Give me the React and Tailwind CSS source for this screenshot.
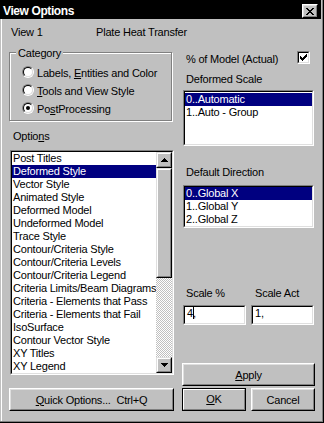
import React from 'react';

const FONT = "font-['Liberation_Sans',Arial,sans-serif]";

// sunken 2px well (listbox, edit, checkbox)
const Sunken = ({ className = '', innerClass = '', children }) => (
    <div className={`border border-t-[#808080] border-l-[#808080] border-b-white border-r-white ${className}`}>
        <div className={`h-full border border-t-black border-l-black border-b-[#dfdfdf] border-r-[#dfdfdf] bg-white ${innerClass}`}>
            {children}
        </div>
    </div>
);

// raised push button edges
const Raised = ({ className = '', innerClass = '', children }) => (
    <div className={`border border-t-white border-l-white border-b-black border-r-black bg-[#c0c0c0] ${className}`}>
        <div className={`h-full border border-t-[#dfdfdf] border-l-[#dfdfdf] border-b-[#808080] border-r-[#808080] ${innerClass}`}>
            {children}
        </div>
    </div>
);

const Button = ({ className = '', children }) => (
    <Raised className={`h-[23px] ${className}`} innerClass="flex items-center justify-center pt-px whitespace-pre">
        {children}
    </Raised>
);

const Radio = ({ checked }) => (
    <div className="w-[12px] h-[12px] rounded-full border border-t-[#808080] border-l-[#808080] border-b-white border-r-white shrink-0">
        <div className="w-full h-full rounded-full border border-t-black border-l-black border-b-[#dfdfdf] border-r-[#dfdfdf] bg-white flex items-center justify-center">
            {checked && <div className="w-[4px] h-[4px] rounded-full bg-black" />}
        </div>
    </div>
);

const Arrow = ({ up }) => (
    <svg width="7" height="4" viewBox="0 0 7 4" shapeRendering="crispEdges">
        <polygon points={up ? '3.5,0 7,4 0,4' : '0,0 7,0 3.5,4'} fill="black" />
    </svg>
);

const ScrollBtn = ({ up }) => (
    <div className="h-[16px] border border-t-[#dfdfdf] border-l-[#dfdfdf] border-b-black border-r-black bg-[#c0c0c0]">
        <div className="h-full border border-t-white border-l-white border-b-[#808080] border-r-[#808080] flex items-center justify-center">
            <Arrow up={up} />
        </div>
    </div>
);

const CloseX = () => {
    const rows = [[0, 2, 6, 8], [1, 3, 5, 7], [2, 6], [3, 5], [2, 6], [1, 3, 5, 7], [0, 2, 6, 8]];
    return (
        <svg width="8" height="7" viewBox="0 0 8 7" shapeRendering="crispEdges">
            {rows.map((r, y) =>
                r.length === 4 ? (
                    <g key={y}>
                        <rect x={r[0]} y={y} width={r[1] - r[0]} height="1" />
                        <rect x={r[2]} y={y} width={r[3] - r[2]} height="1" />
                    </g>
                ) : (
                    <rect key={y} x={r[0]} y={y} width={r[1] - r[0]} height="1" />
                )
            )}
        </svg>
    );
};

const Check = () => (
    <svg width="7" height="7" viewBox="0 0 7 7" shapeRendering="crispEdges">
        <rect x="6" y="0" width="1" height="1" />
        <rect x="5" y="1" width="2" height="1" />
        <rect x="0" y="2" width="1" height="1" />
        <rect x="4" y="2" width="3" height="1" />
        <rect x="0" y="3" width="2" height="1" />
        <rect x="3" y="3" width="3" height="1" />
        <rect x="0" y="4" width="5" height="1" />
        <rect x="1" y="5" width="3" height="1" />
        <rect x="2" y="6" width="1" height="1" />
    </svg>
);

const options = [
    'Post Titles', 'Deformed Style', 'Vector Style', 'Animated Style', 'Deformed Model',
    'Undeformed Model', 'Trace Style', 'Contour/Criteria Style', 'Contour/Criteria Levels',
    'Contour/Criteria Legend', 'Criteria Limits/Beam Diagrams', 'Criteria - Elements that Pass',
    'Criteria - Elements that Fail', 'IsoSurface', 'Contour Vector Style', 'XY Titles', 'XY Legend'
];

const Row = ({ selected, children }) => (
    <div className={`h-[13px] leading-[13px] pl-px whitespace-nowrap ${selected ? 'bg-[#000080] text-white' : ''}`}>
        {children}
    </div>
);

export default function App() {
    return (
        <div className={`${FONT} text-[11px] leading-[13px] tracking-[-0.2px] text-black w-[324px] h-[423px] bg-[#c0c0c0] flex flex-col border-r border-b border-black overflow-hidden`}>
            <div className="flex-1 flex flex-col border-r border-b border-[#808080]">
                {/* title bar */}
                <div className="h-[19px] bg-black flex mr-px shrink-0">
                    <span className="pl-[3px] pt-[5px] text-[12px] leading-[13px] font-bold tracking-[-0.4px] text-white">View Options</span>
                    <Raised className="ml-auto mr-[3px] mt-[4px] w-[16px] h-[14px]" innerClass="flex items-center justify-center">
                        <CloseX />
                    </Raised>
                </div>

                {/* body */}
                <div className="flex-1 ml-px border-l border-white flex flex-col">
                    <div className="flex mt-[7px] pl-[9px]">
                        <span className="w-[85px]">View 1</span>
                        <span>Plate Heat Transfer</span>
                    </div>

                    <div className="flex ml-[7px]">
                        {/* left column */}
                        <div className="w-[165px] flex flex-col">
                            <div className="relative mt-[13px] w-[163px] h-[69px] border border-[#808080] shadow-[inset_1px_1px_0_#fff,1px_1px_0_#fff] pt-[13px] pl-[12px] flex flex-col">
                                <span className="absolute left-[6px] top-[-6px] px-[2px] bg-[#c0c0c0]">Category</span>
                                {[
                                    { label: <>Labels, <u>E</u>ntities and Color</>, checked: false },
                                    { label: <><u>T</u>ools and View Style</>, checked: false },
                                    { label: <>Po<u>s</u>tProcessing</>, checked: true }
                                ].map((r, i) => (
                                    <div key={i} className="h-[19px] flex items-start gap-[3px]">
                                        <Radio checked={r.checked} />
                                        <span className="mt-px">{r.label}</span>
                                    </div>
                                ))}
                            </div>

                            <span className="mt-[9px] pl-[4px]">Optio<u>n</u>s</span>

                            <Sunken className="mt-[7px] ml-px w-[164px] h-[225px]" innerClass="flex">
                                <div className="flex-1 overflow-hidden">
                                    {options.map((o, i) => (
                                        <Row key={o} selected={i === 1}>{o}</Row>
                                    ))}
                                </div>
                                <div className="w-[16px] flex flex-col">
                                    <ScrollBtn up />
                                    <div className="h-[110px] border border-t-[#dfdfdf] border-l-[#dfdfdf] border-b-black border-r-black bg-[#c0c0c0]">
                                        <div className="h-full border border-t-white border-l-white border-b-[#808080] border-r-[#808080]" />
                                    </div>
                                    <div className="flex-1 bg-[repeating-conic-gradient(#ffffff_0_25%,#c0c0c0_0_50%)] bg-size-[2px_2px]" />
                                    <ScrollBtn />
                                </div>
                            </Sunken>

                            <Button className="mt-[13px] w-[165px]"><u>Q</u>uick Options...  Ctrl+Q</Button>
                        </div>

                        {/* right column */}
                        <div className="ml-[8px] w-[133px] flex flex-col">
                            <div className="mt-[12px] h-[15px] flex items-start">
                                <span className="mt-[2px] pl-[4px]">% of Model (Actual)</span>
                                <Sunken className="ml-auto mr-[5px] w-[13px] h-[13px]" innerClass="flex items-center justify-center">
                                    <Check />
                                </Sunken>
                            </div>

                            <span className="mt-[7px] pl-[4px]">Deformed Scale</span>
                            <Sunken className="mt-[4px] ml-px w-[131px] h-[56px]" innerClass="pt-px">
                                <Row selected>0..Automatic</Row>
                                <Row>1..Auto - Group</Row>
                            </Sunken>

                            <span className="mt-[20px] pl-[4px]">Default Direction</span>
                            <Sunken className="mt-[6px] ml-px w-[131px] h-[43px]">
                                <Row selected>0..Global X</Row>
                                <Row>1..Global Y</Row>
                                <Row>2..Global Z</Row>
                            </Sunken>

                            <div className="mt-[59px] flex">
                                <span className="w-[73px] pl-[4px]">Scale %</span>
                                <span>Scale Act</span>
                            </div>
                            <div className="mt-[5px] flex ml-px gap-[5px]">
                                <Sunken className="w-[63px] h-[20px]" innerClass="pl-[2px] flex items-start">
                                    <span>4</span>
                                    <span className="w-px h-[12px] bg-black" />
                                    <span className="-ml-px">,</span>
                                </Sunken>
                                <Sunken className="w-[63px] h-[20px]" innerClass="pl-[2px]">
                                    <span>1,</span>
                                </Sunken>
                            </div>

                            <Button className="mt-[38px] w-[133px]"><u>A</u>pply</Button>
                            <div className="mt-[2px] flex gap-[5px]">
                                <div className="w-[64px] h-[23px] border border-black">
                                    <div className="h-full border border-t-white border-l-white border-b-[#808080] border-r-[#808080] flex items-center justify-center">
                                        <span><u>O</u>K</span>
                                    </div>
                                </div>
                                <Button className="w-[64px]">Cancel</Button>
                            </div>
                        </div>
                    </div>
                </div>
            </div>
        </div>
    );
}
